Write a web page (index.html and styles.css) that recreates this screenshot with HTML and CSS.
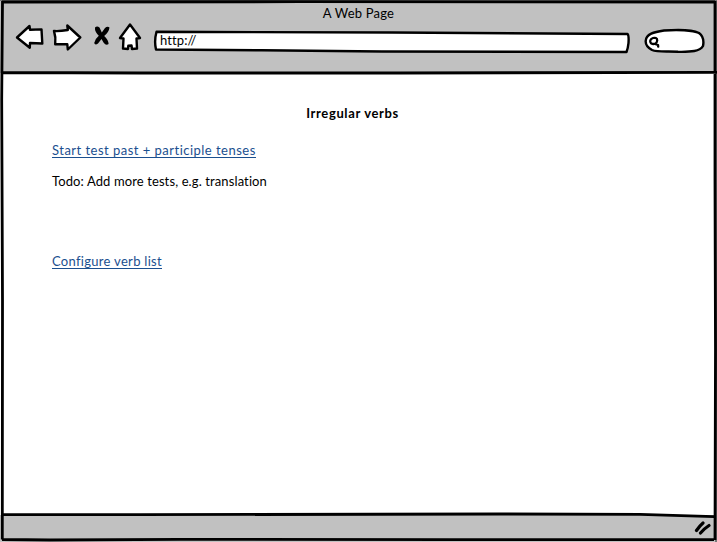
FILE: index.html
```html
<!DOCTYPE html>
<html lang="en">
<head>
<meta charset="utf-8">
<title>A Web Page</title>
<link rel="stylesheet" href="styles.css">
</head>
<body>
<div class="browser">
  <header class="chrome">
    <div class="window-title"><span class="t-title">A Web Page</span></div>
    <div class="toolbar">
      <svg class="nav-icons" viewBox="0 0 130 32" width="130" height="32" aria-hidden="true">
        <g class="ink shape">
          <path d="M3 17.500L15.500 6L16 9.800L27.500 9.400L28.300 23.500L16 23L15.800 27.700Z"/>
          <path d="M40 11Q45 11.500 53.800 10L53.300 5.500L66.300 17.500L53.800 29.500L53.300 24.300L41.200 24.300Q42 17 40 11Z"/>
          <path d="M116 4.500L106 18L109.500 18.500L109 28.500L114 29L114.300 25.800L117.500 25.500L118 29L123 28.500L122.500 18.500L126 18Z"/>
        </g>
        <path class="solid" d="M81 7.500Q83 5.500 85.500 7.500L87.800 12.500L91 8Q93.500 5.800 95.500 7.500Q95 12 90.200 16Q94.500 20 94.600 24Q92 26 89.500 22.500L87.500 19L84 23.500Q81 25.500 80.200 23Q81 19 84.800 15.800Q80.500 11.500 81 7.500Z"/>
      </svg>
      <div class="address">
        <svg class="outline" viewBox="0 0 480 26" width="480" height="26" aria-hidden="true">
          <path class="ink shape" d="M4.500 3.800L240 4.500L475.500 6Q477 7 476.500 15Q476 20 474.500 24L230 23.500L110 22.300L4 21.500Q2 13 4.500 3.800Z"/>
        </svg>
        <span class="url"><span class="t-url">http://</span></span>
      </div>
      <svg class="search" viewBox="0 0 64 28" width="64" height="28" aria-hidden="true">
        <path class="ink shape" d="M3.700 14C4 7 12 5 22 3.500C35 2.500 51 3 57 6C61 9 62 14 61 19C58 24.500 49 25 36 24.800C26 24 16 25.500 10 23C5.500 20.500 3.500 17.500 3.700 14Z"/>
        <path class="ink lens" d="M15.200 13.500C15.300 10.800 13 10.500 11 11C8 12 7.500 14.500 9 16.300C11.500 17.700 15 17 15.200 13.500M13 17L16 18L16.200 19.700"/>
      </svg>
    </div>
  </header>
  <main class="page">
    <h1><span class="t-head">Irregular verbs</span></h1>
    <p class="row"><a class="t-start" href="#">Start test past + participle tenses</a></p>
    <p class="row todo"><span class="t-todo">Todo: Add more tests, e.g. translation</span></p>
    <p class="row configure"><a class="t-config" href="#">Configure verb list</a></p>
  </main>
  <footer class="status">
    <svg viewBox="0 0 20 16" width="20" height="16" aria-hidden="true">
      <path class="grip" d="M10 2Q7 4.500 3.500 9.500M16 4.500Q12 7 7.500 12"/>
    </svg>
  </footer>
  <svg class="frame" viewBox="0 0 717 542" width="717" height="542" aria-hidden="true">
    <path class="edge-gray" d="M715 515V0H717V542H715Z M0 0H717V1H0Z"/>
    <path class="edge" d="M2 2L300 1.700L715 2M2.500 1L1.700 100L2.500 300L2.300 539.500M3 72.500L140 73L400 73L717 72.300M3 514.300L140 514.700L500 514L640 514.300L714 516.700M2 539.500L50 540L180 539.300L450 539.700L714 539.700M715 1V180L715.500 350L715 540"/>
  </svg>
</div>
</body>
</html>
```
FILE: styles.css
```css
* { box-sizing: border-box; }
body {
  margin: 0;
  background: #fff;
  color: #000;
  font: 13px/18px Lato, "Liberation Sans", sans-serif;
}
h1, p { margin: 0; }
.browser {
  position: relative;
  width: 717px;
  height: 542px;
  display: flex;
  flex-direction: column;
  overflow: hidden;
}
.chrome { height: 73px; background: #c1c1c1; padding-top: 4px; }
.window-title { text-align: center; line-height: 18px; height: 16px; }
.toolbar { display: flex; align-items: flex-start; padding-left: 14px; }
.nav-icons { flex: none; }
.address { position: relative; width: 480px; height: 26px; margin: 8px 0 0 8px; }
.outline { position: absolute; left: 0; top: 0; }
.url { position: relative; display: block; padding: 3px 0 0 8px; }
.search { margin: 7px 0 0 10px; }
.page { flex: 1; background: #fff; padding: 31px 12px 0 0; }
h1 { font-size: 13px; font-weight: 700; text-align: center; line-height: 18px; }
.row { margin: 19px 0 0 52px; white-space: nowrap; }
.todo { margin-top: 13px; }
.configure { margin-top: 62px; }
a { color: #1b4f8f; text-decoration: none; display: inline-block; height: 17px; border-bottom: 1px solid #1b4f8f; }
.status { height: 27px; background: #c1c1c1; display: flex; justify-content: flex-end; padding: 6px 4px 0 0; }
.frame { position: absolute; inset: 0; pointer-events: none; }
.ink { stroke: #000; stroke-width: 2.4; stroke-linejoin: round; stroke-linecap: round; }
.shape { fill: #fff; }
.lens { fill: none; stroke-width: 2.3; }
.solid { fill: #000; }
.grip { fill: none; stroke: #000; stroke-width: 3.2; stroke-linecap: round; }
.edge { fill: none; stroke: #000; stroke-width: 2.8; }
.edge-gray { fill: #777; }
.t-title { letter-spacing: .2px; }
.t-url { letter-spacing: .1px; }
.t-head { letter-spacing: .63px; }
.t-start { letter-spacing: .48px; }
.t-todo { letter-spacing: .11px; }
.t-config { letter-spacing: .3px; }
```
